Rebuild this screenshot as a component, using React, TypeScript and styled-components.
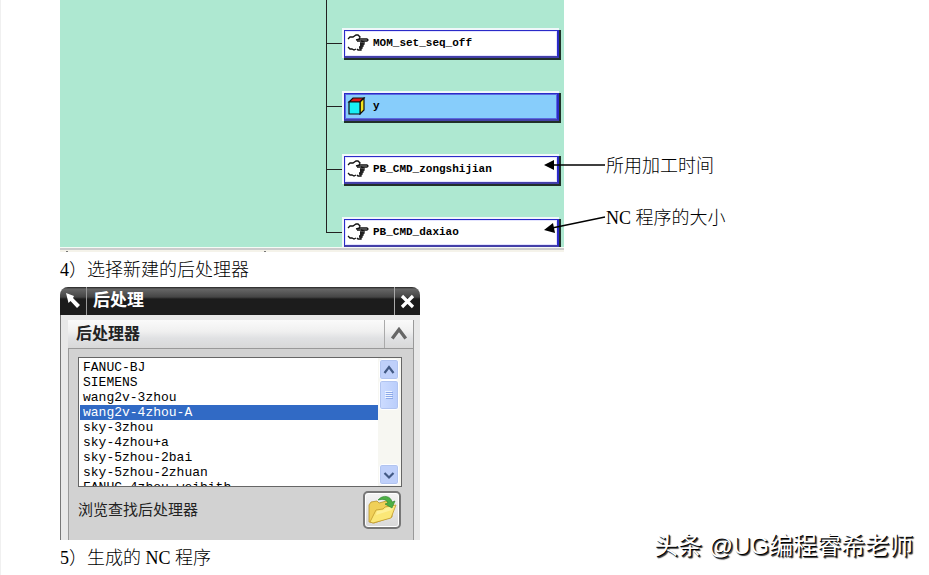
import React, { useState } from "react";
import styled, { createGlobalStyle } from "styled-components";

const GlobalStyle = createGlobalStyle`
  * { box-sizing: border-box; }
  body { margin: 0; background: #fff; }
`;

const songFont = `"Liberation Serif", "Noto Sans CJK SC", serif`;
const uiFont = `"Noto Sans CJK SC", "Liberation Sans", sans-serif`;
const monoFont = `"Liberation Mono", monospace`;

const Page = styled.main`
  position: relative;
  min-height: 100vh;
  padding-left: 59px;
  border-left: 1px solid #f0f0f0;
  color: #000;
  font-family: ${songFont};
  font-weight: 300;
  overflow: hidden;
`;

const Figure = styled.section`
  position: relative;
  display: flex;
`;

const TreePanel = styled.div`
  width: 504px;
  flex: none;
`;

const TreeCanvas = styled.ul`
  margin: 0;
  padding: 12px 0 0 266px;
  list-style: none;
  background: #aee8d1;
  height: 247px;
  overflow: hidden;
`;

const TreeRow = styled.li<{ $last?: boolean }>`
  display: flex;
  align-items: center;
  height: 63px;
  background: linear-gradient(#222, #222) no-repeat 0 0 / 1px ${(p) => (p.$last ? "32px" : "100%")};

  &:first-child {
    margin-top: -12px;
    padding-top: 12px;
    height: 75px;
  }
`;

const Branch = styled.span`
  width: 18px;
  height: 1px;
  background: #222;
`;

const Node = styled.div<{ $active?: boolean }>`
  display: flex;
  align-items: center;
  gap: 4px;
  width: 215px;
  height: 28px;
  padding-left: 2px;
  border: 1px solid #2a2ac8;
  border-right-width: 2px;
  border-bottom: 2px solid #4440a8;
  background: ${(p) => (p.$active ? "#87cdfb" : "#fff")};
  box-shadow: inset 0 0 0 1px ${(p) => (p.$active ? "#5a6ae0" : "#e4e4ff")}, -1px -1px 0 1px #f0f8fa, 1px 1px 0 1px #203028;
  font: bold 11px/16px ${monoFont};
`;

const PanelEdge = styled.div`
  display: flex;
  gap: 196px;
  height: 5px;
  padding: 4px 0 0 6px;
  background: linear-gradient(#f6faf6 0 1px, #ccc 1px 3px, #f5f3ea 3px);
`;

const Tick = styled.span`
  width: 2px;
  height: 1px;
  background: #777;
`;

const Notes = styled.div`
  padding: 140px 0 0 42px;
`;

const Note = styled.p`
  margin: 0;
  font-size: 18px;
  line-height: 52px;
`;

const Latin = styled.span`
  font-weight: 400;
`;

const Arrows = styled.svg`
  position: absolute;
  left: 480px;
  top: 150px;
`;

const Step = styled.p`
  height: 35px;
  margin: 0;
  font-size: 18px;
  line-height: 37px;
`;

const Dialog = styled.section`
  width: 360px;
  border-radius: 8px 8px 0 0;
  background: #e8e8e8;
  font-family: ${uiFont};
  font-weight: 400;
  overflow: hidden;
`;

const TitleBar = styled.header`
  display: flex;
  align-items: center;
  height: 28px;
  background: linear-gradient(#222 0, #666 2px, #454545 10px, #1c1c1c 12px, #1c1c1c 100%);
  color: #fff;
`;

const TitleIcon = styled.span`
  display: flex;
  align-items: center;
  justify-content: center;
  width: 27px;
  height: 28px;
  border-right: 1px solid #999;
`;

const Title = styled.h1`
  flex: 1;
  margin: 0;
  padding-left: 6px;
  font-size: 17px;
  line-height: 24px;
  height: 28px;
`;

const CloseButton = styled.button`
  display: flex;
  align-items: center;
  justify-content: center;
  width: 26px;
  height: 28px;
  padding: 0;
  border: 0;
  border-left: 1px solid #aaa;
  background: none;
`;

const DialogBody = styled.div`
  padding: 5px 6px 0 7px;
  border-left: 1px solid #777;
`;

const GroupHeader = styled.div`
  display: flex;
  height: 28px;
  border-right: 1px solid #999;
  background: linear-gradient(#fafafa, #f0f0f0 40%, #e0e1e3 65%, #d8d8d8);
`;

const GroupTitle = styled.h2`
  flex: 1;
  margin: 0;
  padding-left: 8px;
  color: #222;
  font-size: 16px;
  line-height: 25px;
`;

const CollapseButton = styled.button`
  width: 29px;
  padding: 0;
  border: 0;
  border-left: 1px solid #aaa;
  background: none;
  line-height: 0;
`;

const GroupBody = styled.div`
  padding: 8px 12px 11px 9px;
  border: 1px solid #999;
  border-width: 1px 1px 0 1px;
  background: #d2d2d2;
`;

const ListFrame = styled.div`
  display: flex;
  height: 130px;
  margin-right: -1px;
  border: 1px solid #666;
  background: #fff;
`;

const List = styled.select`
  flex: 1;
  min-width: 0;
  height: 128px;
  margin: 0;
  padding: 2px 0 0 1px;
  border: 0;
  border-radius: 0;
  outline: 0;
  background: #fff;
  color: #000;
  font: 13px/15px ${monoFont};
  overflow: hidden;
  scrollbar-width: none;
`;

const Option = styled.option`
  height: 15px;
  min-height: 15px;
  padding: 0 3px;
  line-height: 15px;

  &:checked {
    background: linear-gradient(#316ac5, #316ac5);
    -webkit-text-fill-color: #fff;
  }
`;

const ScrollBar = styled.div`
  display: flex;
  flex-direction: column;
  width: 23px;
  padding: 1px 2px 1px 1px;
  background: #f7f7f2;
`;

const ScrollButton = styled.button`
  height: 21px;
  padding: 0;
  border: 1px solid #fff;
  border-radius: 3px;
  background: #bfd0fa;
  box-shadow: inset 0 0 0 1px #b1c4f0;
  line-height: 0;
`;

const Thumb = styled.span`
  display: flex;
  align-items: center;
  justify-content: center;
  height: 30px;
  margin-bottom: auto;
  border: 1px solid #fff;
  border-radius: 3px;
  background: linear-gradient(90deg, #cddcff, #b9cdfb);
  box-shadow: inset 0 0 0 1px #b1c4f0;
`;

const BrowseRow = styled.div`
  display: flex;
  align-items: flex-start;
  justify-content: space-between;
  padding-top: 4px;
  color: #222;
  font-size: 15px;
  line-height: 35px;
`;

const BrowseButton = styled.button`
  width: 38px;
  height: 38px;
  padding: 0;
  border: 2px solid #777;
  border-radius: 5px;
  background: linear-gradient(#f4f4f4, #d8d8d8);
  box-shadow: inset 0 0 0 1px #fff;
  line-height: 0;
`;

const Watermark = styled.p`
  position: absolute;
  right: 16px;
  bottom: 11px;
  margin: 0;
  color: #fff;
  font: 24px/36px "Liberation Sans", "Noto Sans CJK SC", sans-serif;
  text-shadow: 1px 1px 0 #000, 2px 2px 1px #333;
  white-space: nowrap;
`;

const HandIcon = () => (
  <svg width="22" height="18" viewBox="0 0 22 18" fill="none" stroke="#111" strokeWidth="1.3">
    <path d="M1 5L3 3H6L9 1H11L13 3L12 5M9 6L13 5H20L21 6L20 7H14" />
    <path d="M10 7H14L17 8V10H13M16 10V12H13M15 12V14H12M14 14V16H11L10 15" />
    <path d="M1 13L3 15H5L7 16L9 15" />
    <path d="M13 9H16M13 11H15M12 13H14" strokeWidth="1.6" />
  </svg>
);

const CubeIcon = () => (
  <svg width="22" height="18" viewBox="0 0 22 18" stroke="#111" strokeWidth="1.2">
    <path d="M2 5L6 1H17L13 5Z" fill="#e01818" />
    <path d="M13 5L17 1V13L13 17Z" fill="#f4e61c" />
    <path d="M2 5H13V17H2Z" fill="#18f0f4" />
  </svg>
);

const Chevron = ({ down = false, size = 12, color = "#435a85" }) => (
  <svg width={size} height={size} viewBox="0 0 12 12" fill="none" stroke={color} strokeWidth="2.2">
    <path d={down ? "M1.5 4L6 8.5L10.5 4" : "M1.5 9L6 3L10.5 9"} />
  </svg>
);

const PointerIcon = () => (
  <svg width="16" height="16" viewBox="0 0 16 16" fill="#fff">
    <path d="M1 0L9 3L8 5L15 12L12 15L5.500 8L3.500 10Z" />
  </svg>
);

const CloseIcon = () => (
  <svg width="15" height="15" viewBox="0 0 15 15" stroke="#fff" strokeWidth="3.2">
    <path d="M2 2L13 13M13 2L2 13" />
  </svg>
);

const FolderIcon = () => (
  <svg width="32" height="32" viewBox="0 0 32 32">
    <path d="M3 28L3 11L5 8L11 7L13 9L24 6L26 9V23L8 29Z" fill="#f0d058" stroke="#b8942c" strokeWidth=".8" />
    <path d="M4 28L10 16L17 15L19 13L30 11L25 24L7 29Z" fill="#fbe777" stroke="#c29a2d" strokeWidth=".8" />
    <path d="M11 17L18 16L20 14L28 12L26 16L10 21Z" fill="#fff5ab" opacity=".65" />
    <path d="M12 6C17 0 25 2 26 8L29 7L26 14L19 10L22 9C20 5 17 5 12 6Z" fill="#4caf45" stroke="#2b842c" strokeWidth=".6" />
  </svg>
);

const processors = [
  "FANUC-BJ",
  "SIEMENS",
  "wang2v-3zhou",
  "wang2v-4zhou-A",
  "sky-3zhou",
  "sky-4zhou+a",
  "sky-5zhou-2bai",
  "sky-5zhou-2zhuan",
  "FANUC-4zhou-weibith",
];

const commands = [
  { name: "MOM_set_seq_off" },
  { name: "y", active: true },
  { name: "PB_CMD_zongshijian" },
  { name: "PB_CMD_daxiao" },
];

export default function App() {
  const [selected, setSelected] = useState("wang2v-4zhou-A");
  return (
    <>
      <GlobalStyle />
      <Page>
        <Figure>
          <TreePanel>
            <TreeCanvas>
              {commands.map((c, i) => (
                <TreeRow key={c.name} $last={i === commands.length - 1}>
                  <Branch />
                  <Node $active={c.active}>
                    {c.active ? <CubeIcon /> : <HandIcon />}
                    {c.name}
                  </Node>
                </TreeRow>
              ))}
            </TreeCanvas>
            <PanelEdge>
              <Tick />
              <Tick />
            </PanelEdge>
          </TreePanel>
          <Notes>
            <Note>所用加工时间</Note>
            <Note>
              <Latin>NC</Latin> 程序的大小
            </Note>
          </Notes>
          <Arrows width="68" height="90" viewBox="0 0 68 90" stroke="#000" strokeWidth="1.3">
            <path d="M12 15H65M12 78L65 67" />
            <path d="M4 15L14 10V20Z" stroke="none" />
            <path d="M4 80L13 73L15 83Z" stroke="none" />
          </Arrows>
        </Figure>
        <Step>
          <Latin>4</Latin>）选择新建的后处理器
        </Step>
        <Dialog>
          <TitleBar>
            <TitleIcon>
              <PointerIcon />
            </TitleIcon>
            <Title>后处理</Title>
            <CloseButton aria-label="关闭">
              <CloseIcon />
            </CloseButton>
          </TitleBar>
          <DialogBody>
            <GroupHeader>
              <GroupTitle id="processors">后处理器</GroupTitle>
              <CollapseButton aria-label="折叠">
                <Chevron size={18} color="#666" />
              </CollapseButton>
            </GroupHeader>
            <GroupBody>
              <ListFrame>
                <List size={8} aria-labelledby="processors" value={selected} onChange={(e) => setSelected(e.target.value)}>
                  {processors.map((p) => (
                    <Option key={p}>{p}</Option>
                  ))}
                </List>
                <ScrollBar>
                  <ScrollButton aria-label="向上">
                    <Chevron />
                  </ScrollButton>
                  <Thumb>
                    <svg width="8" height="9" viewBox="0 0 8 9" stroke="#eef4ff">
                      <path d="M0 .5H7M0 2.500H7M0 4.500H7M0 6.500H7" />
                      <path d="M1 1.500H8M1 3.500H8M1 5.500H8M1 7.500H8" stroke="#8ca8e8" />
                    </svg>
                  </Thumb>
                  <ScrollButton aria-label="向下">
                    <Chevron down />
                  </ScrollButton>
                </ScrollBar>
              </ListFrame>
              <BrowseRow>
                <label htmlFor="browse">浏览查找后处理器</label>
                <BrowseButton id="browse">
                  <FolderIcon />
                </BrowseButton>
              </BrowseRow>
            </GroupBody>
          </DialogBody>
        </Dialog>
        <Step>
          <Latin>5</Latin>）生成的 <Latin>NC</Latin> 程序
        </Step>
        <Watermark>头条 @UG编程睿希老师</Watermark>
      </Page>
    </>
  );
}
